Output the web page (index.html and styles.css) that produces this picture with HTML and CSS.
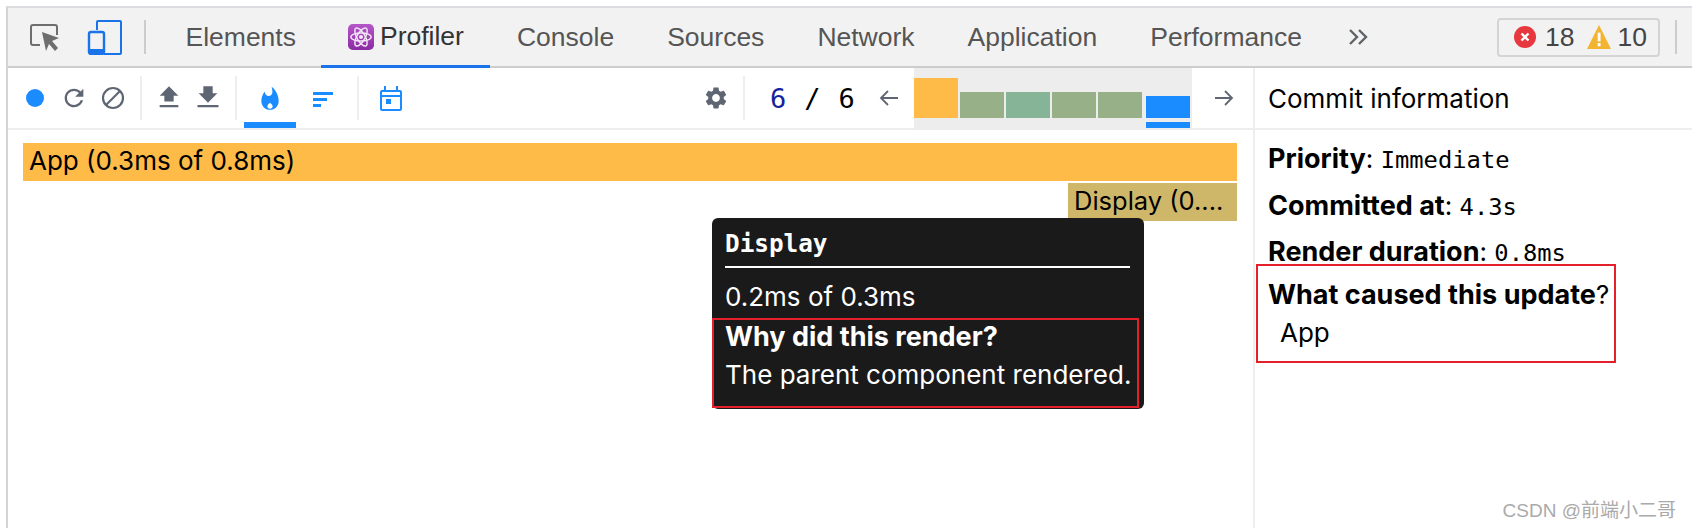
FILE: index.html
```html
<!DOCTYPE html>
<html>
<head>
  <title>Profiler</title>
  <link rel="stylesheet" href="styles.css">
</head>
<body>

<div id="devtools">
  <!-- Main tab strip -->
  <div class="tabbar">
    <button class="tool-btn">
      <svg width="32" height="32" viewBox="0 0 32 32"><path d="M12 24H5a2 2 0 0 1-2-2V6a2 2 0 0 1 2-2h22a2 2 0 0 1 2 2v8" fill="none" stroke="#6e6e6e" stroke-width="2"/><path d="M14 11l17 6-7 3 6 7-3 3-6-7-3 7z" fill="#6e6e6e"/></svg>
    </button>
    <button class="tool-btn">
      <svg width="36" height="36" viewBox="0 0 36 36"><path d="M10 11V3a1 1 0 0 1 1-1h22a1 1 0 0 1 1 1v31a1 1 0 0 1-1 1H17" fill="none" stroke="#1a73e8" stroke-width="2"/><rect x="2" y="13" width="15" height="22" rx="2" fill="none" stroke="#1a73e8" stroke-width="2.4"/><rect x="2" y="30" width="15" height="5" fill="#1a73e8"/></svg>
    </button>
    <div class="tab-sep"></div>
    <div class="tab">Elements</div>
    <div class="tab active">
      <svg class="atom" width="26" height="26" viewBox="0 0 27 27"><defs><linearGradient id="atomBg" x1="0" y1="0" x2="0" y2="1"><stop offset="0" stop-color="#b556c8"/><stop offset="1" stop-color="#8a2ba3"/></linearGradient></defs><rect width="27" height="27" rx="5" fill="url(#atomBg)"/><g fill="none" stroke="#f3e6f6" stroke-width="1.5"><ellipse cx="13.5" cy="13.5" rx="10.5" ry="4.2"/><ellipse cx="13.5" cy="13.5" rx="10.5" ry="4.2" transform="rotate(60 13.5 13.5)"/><ellipse cx="13.5" cy="13.5" rx="10.5" ry="4.2" transform="rotate(120 13.5 13.5)"/></g><circle cx="13.5" cy="13.5" r="2.2" fill="#f3e6f6"/></svg>
      Profiler
    </div>
    <div class="tab">Console</div>
    <div class="tab">Sources</div>
    <div class="tab">Network</div>
    <div class="tab">Application</div>
    <div class="tab">Performance</div>
    <svg class="more" width="20" height="16" viewBox="0 0 20 16"><path d="M2 1l7 7-7 7M11 1l7 7-7 7" fill="none" stroke="#5f6368" stroke-width="2.4"/></svg>
    <div class="issues">
      <svg width="22" height="22" viewBox="0 0 22 22"><circle cx="11" cy="11" r="11" fill="#e8383f"/><path d="M7.5 7.5l7 7M14.5 7.5l-7 7" stroke="#fff" stroke-width="2.4"/></svg>
      <span class="issue-count">18</span>
      <svg class="warn" width="24" height="24" viewBox="0 0 22 22"><path d="M11 0l11 22H0z" fill="#f2b431"/><rect x="9.8" y="7" width="2.6" height="8" fill="#fff"/><rect x="9.8" y="16.5" width="2.6" height="3" fill="#fff"/></svg>
      <span class="issue-count second">10</span>
    </div>
    <div class="tab-sep last"></div>
  </div>

  <div class="content">
    <div class="profiler">
      <!-- Profiler toolbar -->
      <div class="toolbar">
        <button class="icon-btn">
          <svg width="20" height="20" viewBox="0 0 20 20"><circle cx="10" cy="10" r="9" fill="#1a8cff"/></svg>
        </button>
        <button class="icon-btn">
          <svg width="28" height="28" viewBox="0 0 24 24"><path fill="#5f6673" d="M17.65 6.35C16.2 4.9 14.21 4 12 4c-4.42 0-7.99 3.58-7.99 8s3.57 8 7.99 8c3.73 0 6.84-2.55 7.73-6h-2.08c-.82 2.33-3.04 4-5.65 4-3.31 0-6-2.69-6-6s2.69-6 6-6c1.66 0 3.14.69 4.22 1.78L13 11h7V4l-2.35 2.35z"/></svg>
        </button>
        <button class="icon-btn">
          <svg width="24" height="24" viewBox="0 0 24 24"><circle cx="12" cy="12" r="10" fill="none" stroke="#5f6673" stroke-width="2.2"/><path d="M5 19L19 5" stroke="#5f6673" stroke-width="2.2"/></svg>
        </button>
        <div class="tool-sep"></div>
        <button class="icon-btn">
          <svg width="28" height="28" viewBox="0 0 24 24"><path fill="#5f6673" d="M8 15h8v-5h4l-8-8-8 8h4zM4 18h16v2H4z"/></svg>
        </button>
        <button class="icon-btn">
          <svg width="28" height="28" viewBox="0 0 24 24"><path fill="#5f6673" d="M8 2h8v6h4l-8 8-8-8h4zM3 18h18v2H3z"/></svg>
        </button>
        <div class="tool-sep"></div>
        <button class="chart-tab selected">
          <svg width="26" height="26" viewBox="0 0 24 24"><path fill="#1a8cff" d="M13.5.67s.74 2.65.74 4.8c0 2.06-1.35 3.73-3.41 3.73-2.07 0-3.63-1.67-3.63-3.73l.03-.36C5.21 7.51 4 10.62 4 14c0 4.42 3.58 8 8 8s8-3.58 8-8C20 8.61 17.41 3.8 13.5.67z"/><path fill="#fff" d="M12 15.5c-1.5 1.2-2.4 2.2-2.4 3.4 0 1.2 1 2 2.4 2s2.4-.8 2.4-2c0-1.2-.9-2.2-2.4-3.4z"/></svg>
        </button>
        <button class="chart-tab">
          <svg width="22" height="18" viewBox="0 0 22 18"><path fill="#1a8cff" d="M1 2h20v3H1zM1 8h14v3H1zM1 14h8v3H1z"/></svg>
        </button>
        <div class="tool-sep wide"></div>
        <button class="icon-btn">
          <svg width="22" height="26" viewBox="0 0 22 26"><path d="M2 6h18a1 1 0 0 1 1 1v17a1 1 0 0 1-1 1H2a1 1 0 0 1-1-1V7a1 1 0 0 1 1-1zM1 11h20" fill="none" stroke="#1a8cff" stroke-width="2"/><path d="M5 1v5M17 1v5" stroke="#1a8cff" stroke-width="2"/><rect x="6" y="14" width="5" height="5" fill="#1a8cff"/></svg>
        </button>

        <button class="icon-btn push-right">
          <svg width="26" height="26" viewBox="0 0 24 24"><path fill="#5f6673" d="M19.14 12.94c.04-.3.06-.61.06-.94 0-.32-.02-.64-.07-.94l2.03-1.58c.18-.14.23-.41.12-.61l-1.92-3.32c-.12-.22-.37-.29-.59-.22l-2.39.96c-.5-.38-1.03-.7-1.62-.94l-.36-2.54c-.04-.24-.24-.41-.48-.41h-3.84c-.24 0-.43.17-.47.41l-.36 2.54c-.59.24-1.13.57-1.62.94l-2.39-.96c-.22-.08-.47 0-.59.22L2.74 8.87c-.12.21-.08.47.12.61l2.03 1.58c-.05.3-.09.63-.09.94s.02.64.07.94l-2.03 1.58c-.18.14-.23.41-.12.61l1.92 3.32c.12.22.37.29.59.22l2.39-.96c.5.38 1.03.7 1.62.94l.36 2.54c.05.24.24.41.48.41h3.84c.24 0 .44-.17.47-.41l.36-2.54c.59-.24 1.13-.56 1.62-.94l2.39.96c.22.08.47 0 .59-.22l1.92-3.32c.12-.22.07-.47-.12-.61l-2.01-1.58zM12 15.6c-1.98 0-3.6-1.62-3.6-3.6s1.62-3.6 3.6-3.6 3.6 1.62 3.6 3.6-1.62 3.6-3.6 3.6z"/></svg>
        </button>
        <div class="tool-sep count-sep"></div>
        <div class="commit-count">
          <span class="current">6</span>
          <span>/</span>
          <span>6</span>
        </div>
        <button class="icon-btn">
          <svg width="20" height="18" viewBox="0 0 20 18"><path d="M19 9H2M9 2L2 9l7 7" fill="none" stroke="#5f6673" stroke-width="1.8"/></svg>
        </button>
        <div class="commits">
          <div class="commit orange" style="height: 40px"></div>
          <div class="commit green" style="height: 26px"></div>
          <div class="commit teal" style="height: 26px"></div>
          <div class="commit green" style="height: 26px"></div>
          <div class="commit green" style="height: 26px"></div>
          <div class="commit blue" style="height: 22px"></div>
        </div>
        <button class="icon-btn next">
          <svg width="20" height="18" viewBox="0 0 20 18"><path d="M1 9h17M11 2l7 7-7 7" fill="none" stroke="#5f6673" stroke-width="1.8"/></svg>
        </button>
      </div>

      <!-- Flame graph -->
      <div class="flamegraph">
        <div class="bar app">App (0.3ms of 0.8ms)</div>
        <div class="bar display">Display (0....</div>
      </div>

      <div class="tooltip">
        <div class="tooltip-title">Display</div>
        <div class="tooltip-time">0.2ms of 0.3ms</div>
        <div class="tooltip-why">
          <div class="why-title">Why did this render?</div>
          <div class="why-text">The parent component rendered.</div>
        </div>
      </div>
    </div>

    <!-- Commit info sidebar -->
    <div class="sidebar">
      <div class="sidebar-header">Commit information</div>
      <div class="info-row first"><b>Priority</b>: <code>Immediate</code></div>
      <div class="info-row second"><b>Committed at</b>: <code>4.3s</code></div>
      <div class="info-row"><b>Render duration</b>: <code>0.8ms</code></div>
      <div class="cause">
        <div><b>What caused this update</b>?</div>
        <div class="cause-name">App</div>
      </div>
    </div>
  </div>
</div>

<div class="watermark">CSDN @前端小二哥</div>

</body>
</html>
```

FILE: styles.css
```css
* {
  box-sizing: border-box;
}
html, body {
  margin: 0;
  height: 528px;
  overflow: hidden;
  background-color: #fff;
}
body {
  font-family: "Inter", "Liberation Sans", sans-serif;
  color: #000;
  padding: 6px 0 0 6px;
}
button {
  border: 0;
  padding: 0;
  background: none;
  display: flex;
  align-items: center;
  justify-content: center;
}
#devtools {
  height: 522px;
  border-top: 2px solid #dadce0;
  border-left: 2px solid #d4d4d4;
}

/* Tab strip */
.tabbar {
  height: 60px;
  display: flex;
  align-items: center;
  background-color: #f2f2f2;
  border-bottom: 2px solid #cdcdcd;
  font-family: "Liberation Sans", sans-serif;
  font-size: 26.5px;
  color: #555;
}
.tool-btn {
  width: 48px;
  height: 40px;
}
.tool-btn:first-child {
  margin-left: 12px;
  margin-right: 13px;
}
.tab-sep {
  width: 2px;
  height: 34px;
  background-color: #ccc;
  margin: 0 13px 0 15px;
}
.tab-sep.last {
  margin: 0 15px 0 15px;
}
.tab {
  height: 60px;
  padding: 0 26.5px;
  display: flex;
  align-items: center;
  white-space: nowrap;
}
.tab.active {
  color: #333;
  height: 60px;
  margin-bottom: -2px;
  margin-left: -1px;
  border-bottom: 3px solid #1a73e8;
}
.atom {
  margin-right: 6px;
}
.more {
  margin-left: 20px;
}
.issues {
  height: 39px;
  width: 163px;
  margin-left: auto;
  padding-left: 15px;
  border: 2px solid #d4d4d4;
  border-radius: 4px;
  display: flex;
  align-items: center;
  color: #444;
}
.issue-count {
  margin-left: 9px;
}
.issue-count.second {
  margin-left: 6px;
}
.warn {
  margin-left: 13px;
}

.content {
  display: flex;
  height: 460px;
}

/* Profiler */
.profiler {
  width: 1245px;
  flex: none;
  position: relative;
}
.toolbar {
  height: 62px;
  padding-left: 7px;
  display: flex;
  align-items: center;
  border-bottom: 2px solid #eee;
}
.icon-btn {
  width: 39px;
  height: 46px;
  flex: none;
}
.icon-btn.next {
  width: 61px;
  padding-left: 3px;
}
.push-right {
  margin-left: auto;
}
.tool-sep {
  width: 2px;
  height: 44px;
  background-color: #eee;
  margin: 0 7px 0 8px;
  flex: none;
}
.tool-sep.wide {
  margin: 0 12px 0 7px;
}
.tool-sep.count-sep {
  margin-right: 0;
}
.chart-tab {
  width: 52px;
  align-self: stretch;
  padding-top: 2px;
}
.chart-tab + .chart-tab {
  width: 54px;
}
.chart-tab.selected {
  box-shadow: inset 0 -6px 0 #1a8cff;
}
.commit-count {
  width: 124px;
  padding-left: 25px;
  display: flex;
  gap: 18px;
  font-family: "DejaVu Sans Mono", monospace;
  font-size: 27px;
}
.current {
  color: #14219c;
}
.commits {
  width: 278px;
  height: 62px;
  margin: 0 0 -2px 6px;
  padding-bottom: 12px;
  background-color: #ededed;
  display: flex;
  align-items: flex-end;
  gap: 2px;
  flex: none;
}
.commit {
  width: 44px;
  position: relative;
}
.orange {
  background-color: #ffbb47;
}
.green {
  background-color: #97b088;
}
.teal {
  background-color: #85b596;
}
.blue {
  background-color: #1a8cff;
  margin-left: 2px;
}
.blue::after {
  content: "";
  position: absolute;
  left: 0;
  right: 0;
  bottom: -10px;
  height: 6px;
  background-color: #1a8cff;
}

.flamegraph {
  padding: 13px 16px 0 15px;
}
.bar {
  height: 38px;
  line-height: 36px;
  padding-left: 6px;
  font-size: 26px;
  white-space: nowrap;
}
.app {
  background-color: #ffbb47;
}
.display {
  width: 169px;
  margin: 2px 0 0 auto;
  background-color: #cfb76a;
  font-size: 25.5px;
}

.tooltip {
  position: absolute;
  left: 704px;
  top: 150px;
  width: 432px;
  height: 191px;
  padding: 11px 0 0 13px;
  border-radius: 6px;
  background-color: #1a1a1a;
  color: #fff;
  font-size: 26px;
}
.tooltip-title {
  width: 405px;
  height: 39px;
  line-height: 30px;
  border-bottom: 2px solid #fff;
  font-family: "DejaVu Sans Mono", monospace;
  font-weight: bold;
  font-size: 24.3px;
}
.tooltip-time {
  margin-top: 14px;
  line-height: 30px;
}
.tooltip-why {
  width: 427px;
  height: 90px;
  margin: 6px 0 0 -13px;
  padding-left: 11px;
  border: 2px solid #e6202a;
  line-height: 34px;
}
.why-title {
  font-weight: bold;
  font-size: 27px;
}
.why-text {
  margin-top: 4px;
}

/* Sidebar */
.sidebar {
  flex: 1;
  border-left: 2px solid #eee;
  font-size: 26px;
}
.sidebar-header {
  height: 62px;
  line-height: 62px;
  padding-left: 13px;
  border-bottom: 2px solid #eee;
}
.info-row {
  padding-left: 13px;
  margin-top: 15px;
  line-height: 30px;
}
.info-row.first {
  margin-top: 14px;
}
.info-row.second {
  margin-top: 16px;
}
b {
  font-weight: bold;
  font-size: 27px;
}
code {
  font-family: "DejaVu Sans Mono", monospace;
  font-size: 23.8px;
}
.cause {
  width: 360px;
  height: 99px;
  margin: -4px 0 0 1px;
  padding: 14px 0 0 10px;
  border: 2px solid #e6202a;
  line-height: 30px;
}
.cause-name {
  margin-top: 8px;
  padding-left: 12px;
}

.watermark {
  position: absolute;
  right: 16px;
  bottom: 6px;
  font-family: "Liberation Sans", "Noto Sans CJK SC", sans-serif;
  font-size: 19px;
  color: #aaa;
}
```
